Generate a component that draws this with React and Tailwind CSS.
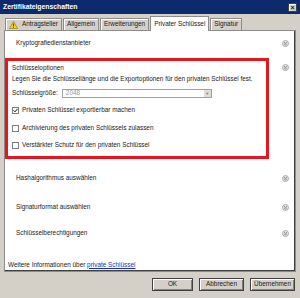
import React from 'react';

const font = { fontFamily: '"Liberation Sans", Arial, sans-serif' };

const ExpandIcon = () => (
	<svg width="7" height="7" viewBox="0 0 7 7" className="shrink-0">
		<circle cx="3.5" cy="3.5" r="3" fill="#e6e6e6" stroke="#9a9a9a" strokeWidth="0.8" />
		<path d="M2 2.2 L3.5 3.4 L5 2.2 M2 3.8 L3.5 5 L5 3.8" fill="none" stroke="#6a6a6a" strokeWidth="0.7" />
	</svg>
);

const Warning = () => (
	<svg width="9" height="8" viewBox="0 0 9 8" className="shrink-0">
		<path d="M4.5 0.4 L8.6 7.6 L0.4 7.6 Z" fill="#f6d21c" stroke="#8a6d00" strokeWidth="0.6" />
		<rect x="4.1" y="2.6" width="0.8" height="2.8" fill="#222" />
		<rect x="4.1" y="6" width="0.8" height="0.8" fill="#222" />
	</svg>
);

const Checkbox = ({ checked }) => (
	<div className="flex h-[7px] w-[7px] shrink-0 items-center justify-center border border-[#7f7f7f] bg-white">
		{checked && (
			<svg width="5" height="5" viewBox="0 0 5 5">
				<path d="M0.5 2.3 L2 3.8 L4.5 0.8" fill="none" stroke="#111" strokeWidth="1" />
			</svg>
		)}
	</div>
);

const Tab = ({ children, active }) => (
	<div
		className={
			active
				? 'relative z-10 -mb-px flex h-[15px] items-center gap-1 border border-b-0 border-[#8c8c8c] bg-white px-[3px] shadow-[inset_1px_1px_0_#fff]'
				: 'flex h-[12px] items-center gap-1 border border-b-0 border-[#8c8c8c] bg-[#d4d0c8] px-[3px] shadow-[inset_1px_1px_0_#fff]'
		}>
		{children}
	</div>
);

const Section = ({ label }) => (
	<div className="flex h-[8px] items-center pl-[11px] pr-[6px]">
		<span>{label}</span>
		<div className="ml-auto">
			<ExpandIcon />
		</div>
	</div>
);

const Button = ({ children, w }) => (
	<div
		className={`flex h-[13px] items-center justify-center border border-[#404040] bg-[#d4d0c8] shadow-[inset_1px_1px_0_#fff,inset_-1px_-1px_0_#808080] ${w}`}>
		{children}
	</div>
);

export default function App() {
	return (
		<div className="flex h-[298px] w-[300px] flex-col overflow-hidden bg-[#d4d0c8] text-[6.4px] leading-none text-[#1a1a1a]" style={font}>
			{/* title bar */}
			<div className="flex h-[14px] items-center bg-[#0c2a6c] pl-[3px] pr-[3px]">
				<span className="text-[6.8px] font-bold text-white">Zertifikateigenschaften</span>
				<div className="ml-auto flex h-[9px] w-[9px] items-center justify-center border border-[#404040] bg-[#d4d0c8] text-[7px] font-bold shadow-[inset_1px_1px_0_#fff]">
					×
				</div>
			</div>

			{/* tabs */}
			<div className="flex h-[16px] items-end gap-px pl-[5px] pt-[2px]">
				<Tab>
					<Warning />
					<span>Antragsteller</span>
				</Tab>
				<Tab>Allgemein</Tab>
				<Tab>Erweiterungen</Tab>
				<Tab active>Privater Schlüssel</Tab>
				<Tab>Signatur</Tab>
			</div>

			{/* panel */}
			<div className="mx-[4px] flex h-[242px] flex-col border border-[#8c8c8c] bg-white shadow-[inset_-1px_-1px_0_#404040]">
				<div className="mt-[8px]">
					<Section label="Kryptografiedienstanbieter" />
				</div>

				<div className="mt-[11px] flex items-start pr-[6px]">
					<div className="flex h-[101px] w-[264px] flex-col border-[3px] border-[#e8141e] pl-[4px]">
						<div className="mt-[3px] flex h-[8px] items-center">Schlüsseloptionen</div>
						<div className="mt-[3px] flex h-[8px] items-center">
							Legen Sie die Schlüssellänge und die Exportoptionen für den privaten Schlüssel fest.
						</div>
						<div className="mt-[6px] flex h-[9px] items-center gap-[4px]">
							<span>Schlüsselgröße:</span>
							<div className="flex h-[9px] w-[150px] items-center border border-[#a0a0a0] bg-white pl-[3px] text-[#9a9a9a]">
								<span>2048</span>
								<div className="ml-auto flex h-[7px] w-[7px] items-center justify-center bg-[#e0ddd6] text-[4px] text-[#808080]">▼</div>
							</div>
						</div>
						<div className="mt-[8px] flex h-[8px] items-center gap-[3px]">
							<Checkbox checked />
							<span>Privaten Schlüssel exportierbar machen</span>
						</div>
						<div className="mt-[10px] flex h-[8px] items-center gap-[3px]">
							<Checkbox />
							<span>Archivierung des privaten Schlüssels zulassen</span>
						</div>
						<div className="mt-[9px] flex h-[8px] items-center gap-[3px]">
							<Checkbox />
							<span>Verstärkter Schutz für den privaten Schlüssel</span>
						</div>
					</div>
					<div className="ml-auto mt-[6px]">
						<ExpandIcon />
					</div>
				</div>

				<div className="mt-[15px]">
					<Section label="Hashalgorithmus auswählen" />
				</div>
				<div className="mt-[21px]">
					<Section label="Signaturformat auswählen" />
				</div>
				<div className="mt-[18px]">
					<Section label="Schlüsselberechtigungen" />
				</div>

				<div className="mt-auto mb-[2px] flex h-[8px] items-center pl-[3px]">
					<span>Weitere Informationen über&nbsp;</span>
					<span className="text-[#1a2fb8] underline">private Schlüssel</span>
				</div>
			</div>

			{/* buttons */}
			<div className="mt-[6px] flex justify-end gap-[6px] pr-[5px]">
				<Button w="w-[41px]">OK</Button>
				<Button w="w-[45px]">Abbrechen</Button>
				<Button w="w-[45px]">Übernehmen</Button>
			</div>
		</div>
	);
}
